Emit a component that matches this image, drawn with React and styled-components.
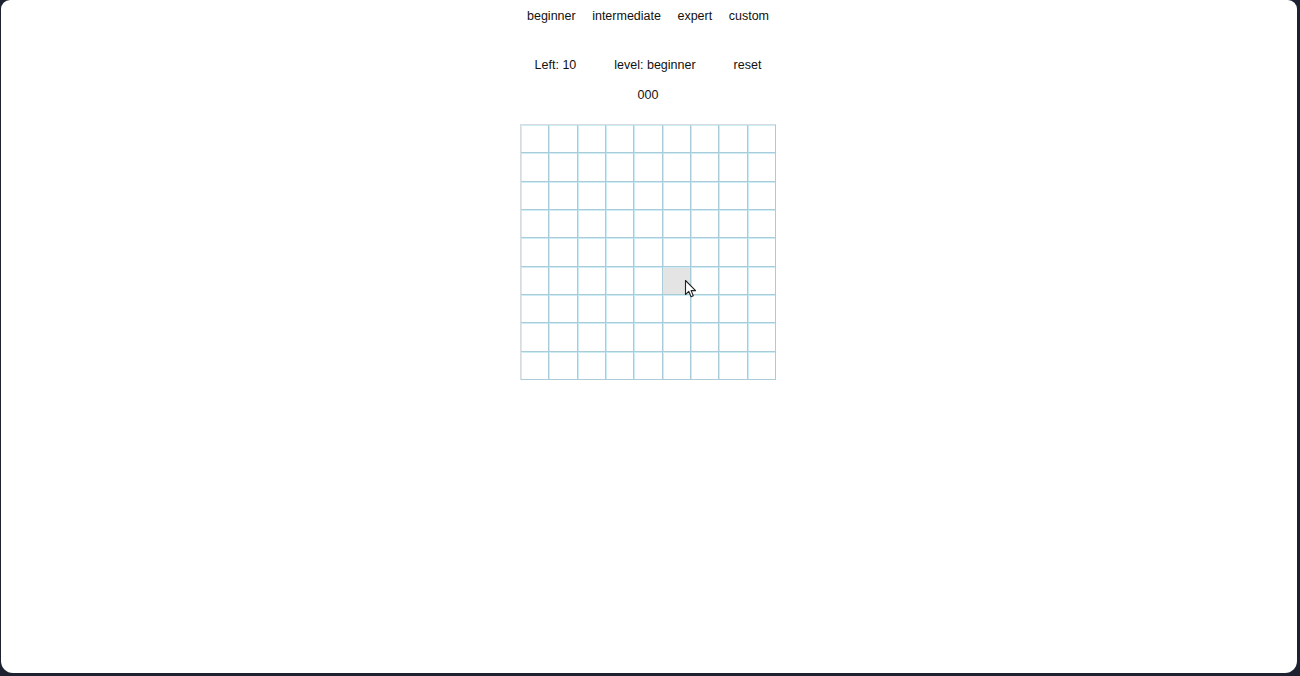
import React, { useState } from 'react'
import styled, { createGlobalStyle } from 'styled-components';

const GlobalStyle = createGlobalStyle`
    html, body {
        margin: 0;
        padding: 0;
        background: #1d2130;
    }
    * {
        box-sizing: border-box;
    }
`

const LEVELS = ['beginner', 'intermediate', 'expert', 'custom'];
const SIZE = 9;

function Cursor() {
    return (
        <CursorIcon width="13" height="20" viewBox="0 0 13 20">
            <path d="M1.5 1.5 L1.5 15.5 L4.8 12.4 L7.1 17.8 L9.3 16.8 L7.1 11.6 L11.6 11.6 Z" fill="#fff" stroke="#222" strokeWidth="1.1" strokeLinejoin="round"/>
        </CursorIcon>
    )
}

function App() {
    const [level, setLevel] = useState('beginner');
    const hovered = 5 * SIZE + 5;

    const cells = () => {
        const result = [];
        for(let i = 0; i < SIZE * SIZE; i++){
            result.push(
                <Cell key={i} $hover={i === hovered}>
                    {i === hovered && <Cursor/>}
                </Cell>
            )
        }
        return result;
    }

    return (
        <Backdrop>
            <GlobalStyle/>
            <Window>
                <Game>
                    <LevelMenu>
                        {LEVELS.map((item) => (
                            <LevelButton key={item} onClick={() => setLevel(item)}>{item}</LevelButton>
                        ))}
                    </LevelMenu>
                    <StatusBar>
                        <span>Left: 10</span>
                        <span>level: {level}</span>
                        <LevelButton>reset</LevelButton>
                    </StatusBar>
                    <Timer>000</Timer>
                    <Board>
                        {cells()}
                    </Board>
                </Game>
            </Window>
        </Backdrop>
    )
}

export default App

const Backdrop = styled.div`
    width: 1300px;
    height: 676px;
    padding: 0 3px 3px 1px;
    background: #1d2130;
`

const Window = styled.div`
    height: 100%;
    background: #fff;
    border-radius: 9px 9px 12px 12px;
    overflow: hidden;
`

const Game = styled.div`
    display: flex;
    flex-direction: column;
    align-items: center;
    padding-top: 8px;
    padding-right: 2px;
    font-family: "Liberation Sans", Arial, sans-serif;
    font-size: 12.5px;
    line-height: 16px;
    color: #111;
`

const LevelMenu = styled.div`
    display: flex;
    gap: 16.5px;
`

const LevelButton = styled.span`
    cursor: pointer;
`

const StatusBar = styled.div`
    display: flex;
    gap: 38px;
    margin-top: 33px;
`

const Timer = styled.div`
    margin-top: 14px;
`

const Board = styled.div`
    display: grid;
    grid-template-columns: repeat(${SIZE}, 1fr);
    width: 256px;
    height: 256px;
    margin-top: 21px;
    border-top: 1px solid #d6dcdf;
    border-left: 1px solid #d6dcdf;
`

const Cell = styled.div`
    position: relative;
    border-right: 1px solid #a9ccd8;
    border-bottom: 1px solid #a9ccd8;
    box-shadow: inset 1px 1px 0 #cdedf6;
    background: ${props => props.$hover ? '#e4e4e4' : '#fff'};
`

const CursorIcon = styled.svg`
    position: absolute;
    z-index: 1;
    left: 21px;
    top: 12px;
`
